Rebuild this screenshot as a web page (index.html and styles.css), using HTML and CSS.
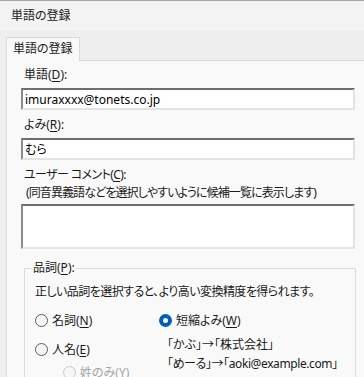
FILE: index.html
```html
<!DOCTYPE html>
<html lang="ja">
  <head>
    <meta charset="UTF-8" />
    <title>単語の登録</title>
    <link rel="stylesheet" href="styles.css">
  </head>
  <body>
    <div class="window">
      <div class="title-bar">単語の登録</div>

      <div class="tab-strip">
        <div class="tab">単語の登録</div>
      </div>

      <div class="panel">
        <div class="field-label">単語(<u>D</u>):</div>
        <input class="text-box" type="text" value="imuraxxxx@tonets.co.jp" />

        <div class="field-label second">よみ(<u>R</u>):</div>
        <input class="text-box" type="text" value="むら" />

        <div class="field-label comment">ユーザー コメント(<u>C</u>):</div>
        <div class="field-note">(同音異義語などを選択しやすいように候補一覧に表示します)</div>
        <div class="text-area"></div>

        <fieldset class="group">
          <legend>品詞(<u>P</u>):</legend>
          <div class="group-note">正しい品詞を選択すると、より高い変換精度を得られます。</div>

          <div class="options">
            <div class="col">
              <div class="radio"><span class="dot"></span><span>名詞(<u>N</u>)</span></div>
              <div class="radio person"><span class="dot"></span><span>人名(<u>E</u>)</span></div>
              <div class="radio sub disabled"><span class="dot"></span><span>姓のみ(<u>Y</u>)</span></div>
            </div>
            <div class="col">
              <div class="radio"><span class="dot checked"></span><span>短縮よみ(<u>W</u>)</span></div>
              <div class="example">「かぶ」→「株式会社」</div>
              <div class="example long">「めーる」→「aoki@example.com」</div>
            </div>
          </div>
        </fieldset>
      </div>
    </div>
  </body>
</html>
```

FILE: styles.css
```css
body {
  margin: 0;
  font-family: 'Noto Sans', 'Noto Sans CJK JP', sans-serif;
  font-size: 12px;
  color: #1a1a1a;
  background: #eeeeee;
  font-feature-settings: 'palt';
}

u {
  text-decoration-thickness: 1px;
  text-underline-offset: 2px;
}

.window {
  height: 377px;
  overflow: hidden;
  border-top: 1px solid #a8a8a8;
}

.title-bar {
  height: 30px;
  line-height: 30px;
  padding-left: 11px;
  background: #f3f3f3;
}

.tab-strip {
  height: 29px;
  display: flex;
  align-items: flex-end;
  padding-left: 6px;
  background: #eeeeee;
}

.tab {
  height: 23px;
  line-height: 22px;
  padding: 0 6px;
  background: #f9f9f9;
  border: 1px solid #dadada;
  border-bottom: none;
  margin-bottom: -1px;
  position: relative;
}

.panel {
  margin-left: 6px;
  background: #f9f9f9;
  border-top: 1px solid #dadada;
  border-left: 1px solid #dadada;
  padding: 6px 9px 0 14px;
  height: 320px;
}

.field-label {
  line-height: 16px;
  padding-left: 3px;
}

.field-label.second {
  margin-top: 7px;
}

.field-label.comment {
  margin-top: 9px;
  letter-spacing: -0.6px;
}

.field-note {
  line-height: 16px;
  margin-top: 2px;
  padding-left: 5px;
  letter-spacing: -0.9px;
}

.text-box,
.text-area {
  display: block;
  box-sizing: border-box;
  width: 334px;
  margin: 5px 0 0;
  padding: 0 2px;
  font: inherit;
  color: #000;
  background: #ffffff;
  border: 2px solid #e3e3e3;
  border-top-color: #6e6e6e;
  border-left-color: #8a8a8a;
  outline: none;
}

.text-box {
  height: 22px;
}

.text-box + .field-label {
  margin-top: 7px;
}

.text-area {
  height: 45px;
  margin-top: 3px;
}

.group {
  margin: 11px 0 0 3px;
  padding: 2px 0 0 10px;
  width: 320px;
  border: 1px solid #dcdcdc;
  border-bottom: none;
  height: 200px;
}

.group legend {
  padding: 0 1px;
  margin-left: -3px;
  line-height: 16px;
}

.group-note {
  line-height: 16px;
  margin-top: 6px;
  letter-spacing: -0.55px;
}

.options {
  display: grid;
  grid-template-columns: 124px 1fr;
  margin-top: 12px;
}

.radio {
  display: flex;
  align-items: center;
  gap: 4px;
  height: 16px;
}

.radio.person {
  margin-top: 13px;
}

.radio.sub {
  margin: 7px 0 0 28px;
}

.radio.disabled {
  color: #a5a5a5;
}

.dot {
  box-sizing: border-box;
  width: 13px;
  height: 13px;
  border-radius: 50%;
  border: 1px solid #5c5c5c;
  background: #f6f6f6;
}

.disabled .dot {
  border-color: #c8c8c8;
}

.dot.checked {
  border: 4px solid #005fb8;
  background: #ffffff;
}

.example {
  line-height: 16px;
  margin: 9px 0 0 8px;
}

.example + .example {
  margin-top: 3px;
}

.example.long {
  letter-spacing: -0.4px;
}
```
